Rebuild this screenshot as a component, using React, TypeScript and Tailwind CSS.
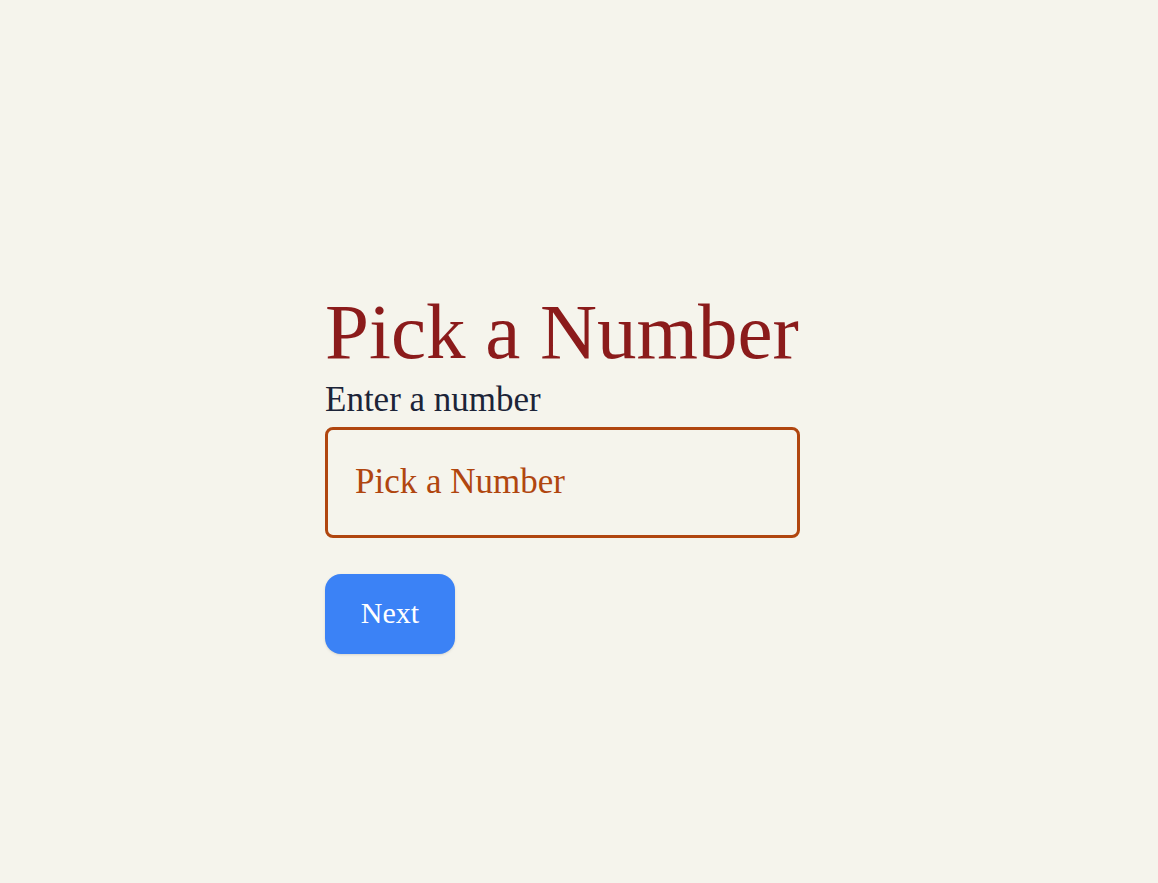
export default function App() {
  return (
    <div className="min-h-[883px] w-full bg-[#f5f4ec] pt-[305px]" style={{ fontFamily: '"Liberation Serif", "Times New Roman", serif' }}>
      <div className="ml-[325px] flex w-[475px] flex-col">
        <h1 className="m-0 text-[79px] font-normal leading-[54px] text-[#8b1b1b]">Pick a Number</h1>
        <label className="mt-[15px] text-[35px] leading-normal text-[#1c2438]">Enter a number</label>
        <input
          type="text"
          placeholder="Pick a Number"
          className="h-[111px] w-[475px] rounded-lg border-[3px] border-[#b0460f] bg-transparent pl-[27px] pr-[26px] text-[35px] text-[#b0460f] outline-none placeholder:text-[#b0460f]"
        />
        <div className="mt-[36px]">
          <button className="h-[80px] w-[130px] rounded-2xl bg-[#3b82f6] pb-[3px] text-[30px] text-white shadow">
            Next
          </button>
        </div>
      </div>
    </div>
  )
}
